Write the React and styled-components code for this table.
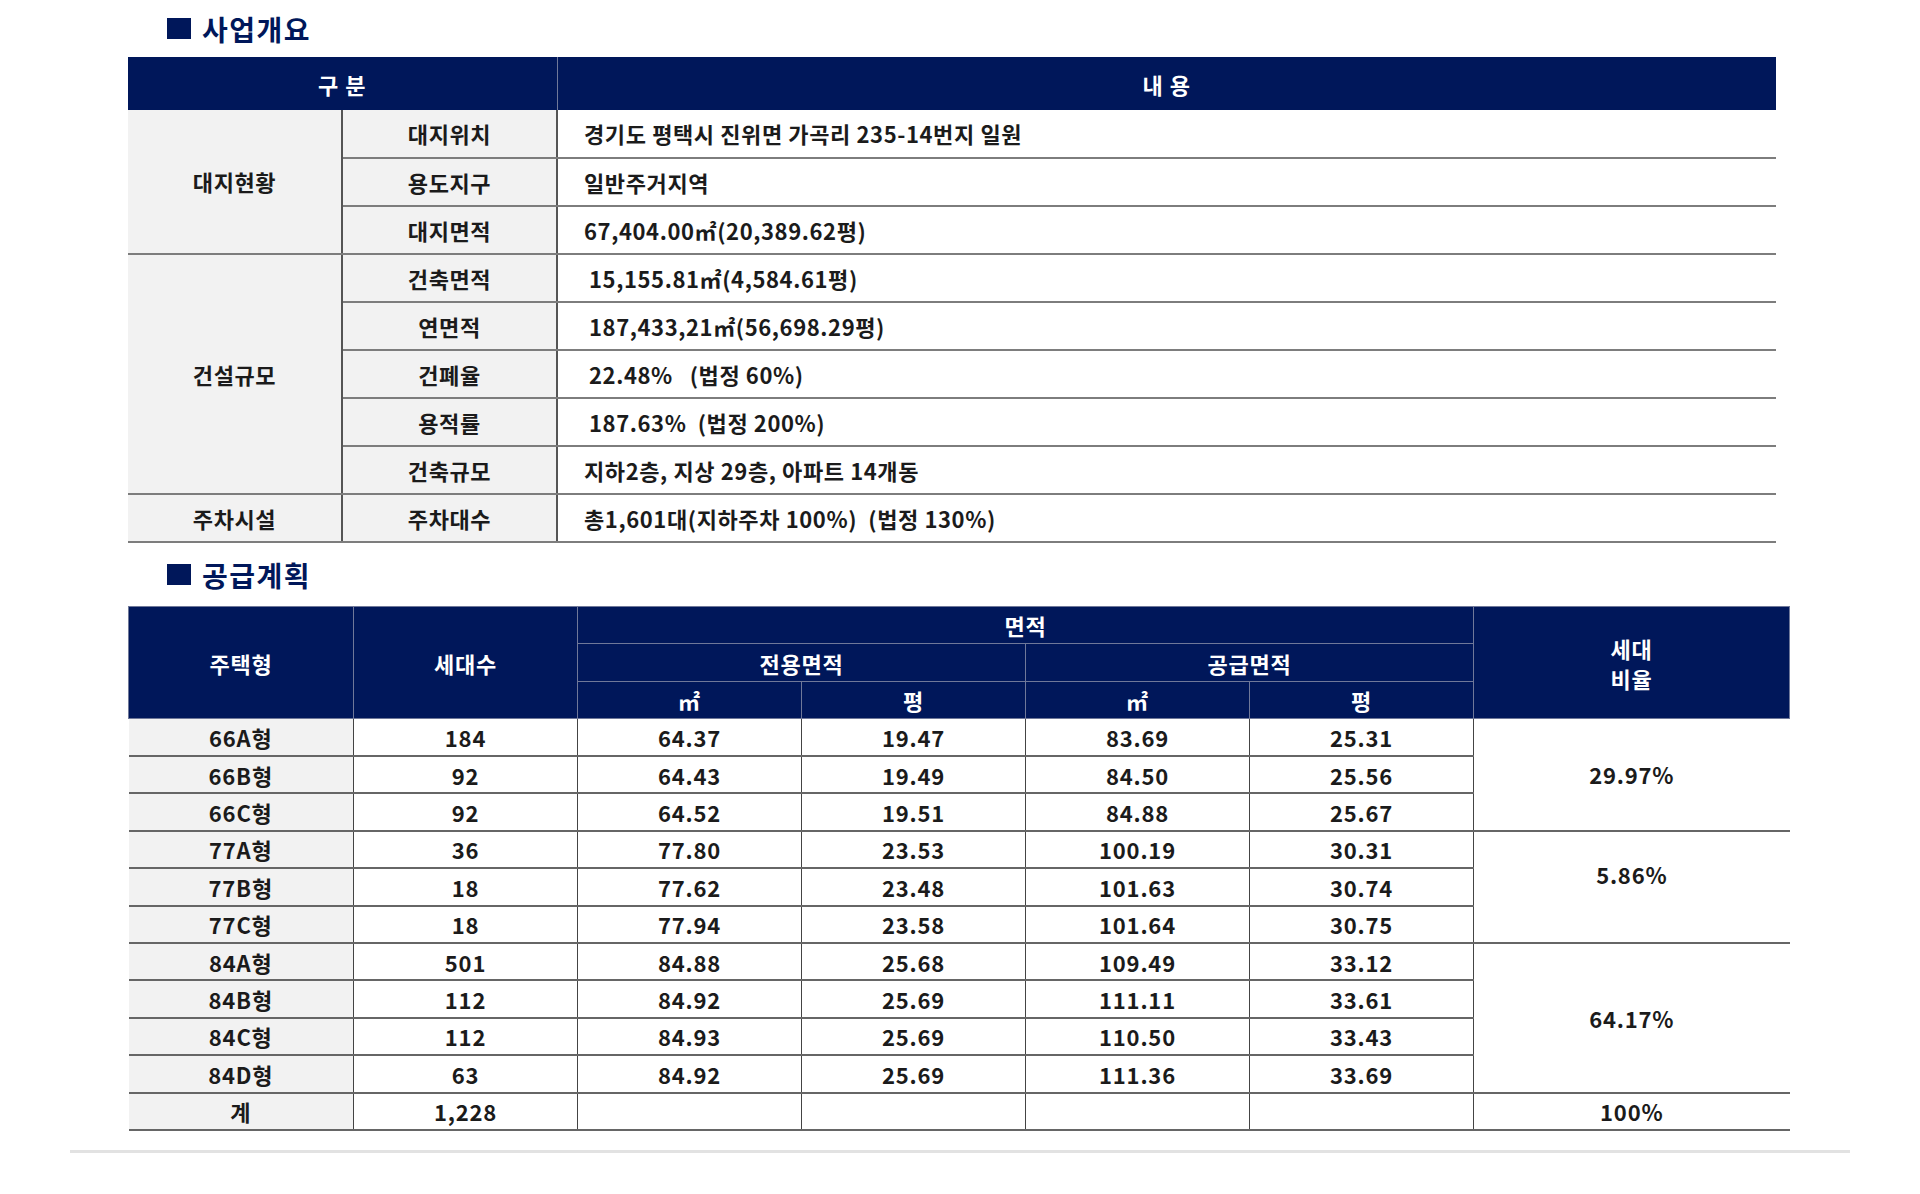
import styled, { createGlobalStyle } from "styled-components";

const NAVY = "#00175a";

const GlobalStyle = createGlobalStyle`
    html, body {
        margin: 0;
        padding: 0;
        background: #fff;
    }
    body {
        font-family: "Noto Sans CJK KR", "Noto Sans", sans-serif;
        color: #1b1b1b;
    }
`;

// 사업개요 데이터
const overview = [
    { group: "대지현황", span: 3, label: "대지위치", value: "경기도 평택시 진위면 가곡리 235-14번지 일원" },
    { label: "용도지구", value: "일반주거지역" },
    { label: "대지면적", value: "67,404.00㎡(20,389.62평)" },
    { group: "건설규모", span: 5, label: "건축면적", value: "15,155.81㎡(4,584.61평)", indent: 31 },
    { label: "연면적", value: "187,433,21㎡(56,698.29평)", indent: 31 },
    { label: "건폐율", value: "22.48%   (법정 60%)", indent: 31 },
    { label: "용적률", value: "187.63%  (법정 200%)", indent: 31 },
    { label: "건축규모", value: "지하2층, 지상 29층, 아파트 14개동" },
    { group: "주차시설", span: 1, label: "주차대수", value: "총1,601대(지하주차 100%)  (법정 130%)" },
];

// 공급계획 데이터 (lift: 세대비율 글자 위치 보정)
const supply = [
    { type: "66A형", count: "184", a: "64.37", b: "19.47", c: "83.69", d: "25.31", ratio: "29.97%", span: 3 },
    { type: "66B형", count: "92", a: "64.43", b: "19.49", c: "84.50", d: "25.56" },
    { type: "66C형", count: "92", a: "64.52", b: "19.51", c: "84.88", d: "25.67" },
    { type: "77A형", count: "36", a: "77.80", b: "23.53", c: "100.19", d: "30.31", ratio: "5.86%", span: 3, lift: 26 },
    { type: "77B형", count: "18", a: "77.62", b: "23.48", c: "101.63", d: "30.74" },
    { type: "77C형", count: "18", a: "77.94", b: "23.58", c: "101.64", d: "30.75" },
    { type: "84A형", count: "501", a: "84.88", b: "25.68", c: "109.49", d: "33.12", ratio: "64.17%", span: 4 },
    { type: "84B형", count: "112", a: "84.92", b: "25.69", c: "111.11", d: "33.61" },
    { type: "84C형", count: "112", a: "84.93", b: "25.69", c: "110.50", d: "33.43" },
    { type: "84D형", count: "63", a: "84.92", b: "25.69", c: "111.36", d: "33.69" },
];

const App = () => {
    return (
        <Page>
            <GlobalStyle />
            <Content>
                <Heading $height={57}>사업개요</Heading>
                <OverviewTable>
                    <colgroup>
                        <col style={{ width: 214 }} />
                        <col style={{ width: 215 }} />
                        <col />
                    </colgroup>
                    <thead>
                        <HeadRow $height={53}>
                            <HeadCell colSpan={2}>구 분</HeadCell>
                            <HeadCell>내 용</HeadCell>
                        </HeadRow>
                    </thead>
                    <tbody>
                        {overview.map((row) => (
                            <BodyRow key={row.label} $height={48}>
                                {row.group && (
                                    <Cell rowSpan={row.span} $grey $divider>
                                        {row.group}
                                    </Cell>
                                )}
                                <Cell $grey $divider>{row.label}</Cell>
                                <Cell $align="left" $indent={row.indent || 26}>{row.value}</Cell>
                            </BodyRow>
                        ))}
                    </tbody>
                </OverviewTable>

                <Heading $height={63}>공급계획</Heading>
                <SupplyTable>
                    <colgroup>
                        <col style={{ width: 225 }} />
                        <col style={{ width: 224 }} />
                        <col style={{ width: 224 }} />
                        <col style={{ width: 224 }} />
                        <col style={{ width: 224 }} />
                        <col style={{ width: 224 }} />
                        <col />
                    </colgroup>
                    <thead>
                        <HeadRow $height={37.4}>
                            <SupplyHead rowSpan={3}>주택형</SupplyHead>
                            <SupplyHead rowSpan={3}>세대수</SupplyHead>
                            <SupplyHead colSpan={4}>면적</SupplyHead>
                            <SupplyHead rowSpan={3} $tight>세대<br />비율</SupplyHead>
                        </HeadRow>
                        <HeadRow $height={37.4}>
                            <SupplyHead colSpan={2}>전용면적</SupplyHead>
                            <SupplyHead colSpan={2}>공급면적</SupplyHead>
                        </HeadRow>
                        <HeadRow $height={37.4}>
                            <SupplyHead>㎡</SupplyHead>
                            <SupplyHead>평</SupplyHead>
                            <SupplyHead>㎡</SupplyHead>
                            <SupplyHead>평</SupplyHead>
                        </HeadRow>
                    </thead>
                    <tbody>
                        {supply.map((row) => (
                            <BodyRow key={row.type} $height={37.4}>
                                <NumCell $grey>{row.type}</NumCell>
                                <NumCell>{row.count}</NumCell>
                                <NumCell>{row.a}</NumCell>
                                <NumCell>{row.b}</NumCell>
                                <NumCell>{row.c}</NumCell>
                                <NumCell>{row.d}</NumCell>
                                {row.ratio && (
                                    <NumCell rowSpan={row.span} $last $lift={row.lift}>
                                        {row.ratio}
                                    </NumCell>
                                )}
                            </BodyRow>
                        ))}
                        <BodyRow $height={37.4}>
                            <NumCell $grey>계</NumCell>
                            <NumCell>1,228</NumCell>
                            <NumCell />
                            <NumCell />
                            <NumCell />
                            <NumCell />
                            <NumCell $last>100%</NumCell>
                        </BodyRow>
                    </tbody>
                </SupplyTable>
            </Content>
            <Rule />
        </Page>
    );
};

export default App;


// styled-components
const Page = styled.div`
    width: 1920px;
    height: 1194px;
    overflow: hidden;
`;

const Content = styled.div`
    padding-left: 128px;
`;

const Heading = styled.h2`
    margin: 0;
    height: ${(p) => p.$height}px;
    display: flex;
    align-items: center;
    padding-left: 39px;
    box-sizing: border-box;
    color: ${NAVY};
    font-size: 28px;
    font-weight: 700;
    letter-spacing: 1.5px;

    &::before {
        content: "";
        display: inline-block;
        width: 24px;
        height: 21px;
        margin-right: 11px;
        background: ${NAVY};
    }
`;

const OverviewTable = styled.table`
    width: 1648px;
    border-collapse: collapse;
    table-layout: fixed;
    font-size: 22px;
    font-weight: 700;
    letter-spacing: 0.6px;
`;

const SupplyTable = styled(OverviewTable)`
    width: 1662px;
    letter-spacing: 0.8px;
`;

const HeadRow = styled.tr`
    height: ${(p) => p.$height}px;
`;

const BodyRow = styled.tr`
    height: ${(p) => p.$height}px;
`;

const HeadCell = styled.th`
    background: ${NAVY};
    color: #fff;
    font-size: 22px;
    font-weight: 700;
    padding: 0;
    letter-spacing: 1px;
    border-right: 1px solid #6f7899;

    &:last-child {
        border-right: none;
    }
`;

const SupplyHead = styled.th`
    background: ${NAVY};
    color: #fff;
    font-size: 22px;
    font-weight: 700;
    padding: 0;
    line-height: ${(p) => (p.$tight ? "30px" : "normal")};
    border: 1px solid #6f7899;
`;

const Cell = styled.td`
    padding: 0 0 0 ${(p) => (p.$align === "left" ? p.$indent : 0)}px;
    text-align: ${(p) => p.$align || "center"};
    background: ${(p) => (p.$grey ? "#f2f2f2" : "#fff")};
    border-bottom: 2px solid #7d7d7d;
    border-right: ${(p) => (p.$divider ? "2px solid #555" : "none")};
    white-space: pre;
    line-height: 1.2;
`;

const NumCell = styled.td`
    padding: 0 0 ${(p) => p.$lift || 0}px;
    text-align: center;
    background: ${(p) => (p.$grey ? "#f2f2f2" : "#fff")};
    border-bottom: 2px solid #666;
    border-right: ${(p) => (p.$last ? "none" : "1px solid #444")};
    line-height: 1.2;
`;

const Rule = styled.div`
    margin: 19px 0 0 70px;
    width: 1780px;
    height: 3px;
    background: #e2e2e2;
`;
